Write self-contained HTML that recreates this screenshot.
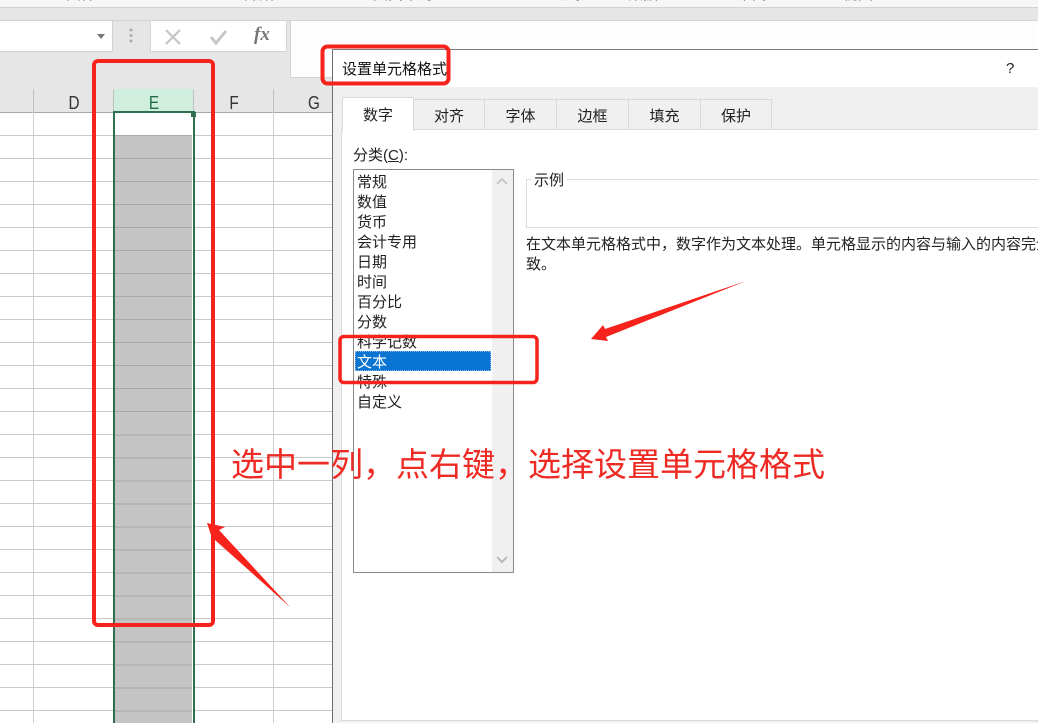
<!DOCTYPE html>
<html><head><meta charset="utf-8">
<style>
html,body{margin:0;padding:0}
body{width:1038px;height:723px;overflow:hidden;background:#fff;position:relative;font-family:"Liberation Sans","Microsoft YaHei","Noto Sans CJK SC",sans-serif;color:#222}
div{position:absolute;box-sizing:border-box}
.t{white-space:nowrap;font-size:15px;line-height:20px}
.li{left:357px;font-size:15px;line-height:20px;white-space:nowrap;color:#222}
.tab{top:99px;height:31px;background:#f0f0f0;border:1px solid #d9d9d9;border-left:0;text-align:center;font-size:15px;line-height:33px}
.hl{left:0;width:333px;height:1px;background:#c8c8c8}
.vl{top:112px;width:1px;height:611px;background:#d0d0d0}
.col{top:93px;font-size:18px;line-height:20px;color:#333;width:40px;text-align:center;transform:scaleX(.85)}
.rb{top:-14px;font-size:15px;line-height:18px;color:#555;white-space:nowrap}
</style></head><body>
<!-- ribbon -->
<div style="left:0;top:0;width:1038px;height:8px;background:#f6f6f6;border-bottom:1px solid #d2d2d2"></div>
<div class="rb" style="left:66px">文件</div>
<div class="rb" style="left:244px">开始</div>
<div class="rb" style="left:373px">页面布局</div>
<div class="rb" style="left:550px">公式</div>
<div class="rb" style="left:628px">数据</div>
<div class="rb" style="left:737px">审阅</div>
<div class="rb" style="left:843px">视图</div>
<div style="left:0;top:8px;width:1038px;height:104px;background:#e6e6e6"></div>
<div style="left:0;top:20px;width:1038px;height:1px;background:#d0d0d0"></div>
<!-- name box -->
<div style="left:0;top:20px;width:113px;height:32px;background:#fff;border:1px solid #d4d4d4;border-left:0"></div>
<svg style="position:absolute;left:0;top:0" width="300" height="60">
<path d="M97 34h8l-4 5z" fill="#777"/>
<circle cx="131" cy="30" r="1.5" fill="#aaa"/><circle cx="131" cy="35.500" r="1.500" fill="#aaa"/><circle cx="131" cy="41" r="1.500" fill="#aaa"/>
</svg>
<div style="left:150px;top:20px;width:137px;height:32px;background:#fff;border:1px solid #d4d4d4"></div>
<svg style="position:absolute;left:0;top:0" width="300" height="60">
<path d="M166 30L180 44M180 30L166 44" stroke="#c4c4c4" stroke-width="2.200" fill="none"/>
<path d="M211 37L216 43L226 31" stroke="#c8c8c8" stroke-width="3" fill="none"/>
</svg>
<div style="left:254px;top:23px;font:italic bold 19px/24px 'Liberation Serif',serif;color:#777">fx</div>
<div style="left:290px;top:20px;width:748px;height:58px;background:#fdfdfd;border:1px solid #d4d4d4;border-right:0"></div>
<!-- column headers -->
<div style="left:114px;top:89px;width:80px;height:23px;background:#cfeedd"></div>
<div style="left:33px;top:89px;width:1px;height:23px;background:#c0c0c0"></div>
<div style="left:113px;top:89px;width:1px;height:23px;background:#c0c0c0"></div>
<div style="left:193px;top:89px;width:1px;height:23px;background:#c0c0c0"></div>
<div style="left:273px;top:89px;width:1px;height:23px;background:#c0c0c0"></div>
<div class="col" style="left:54px">D</div>
<div class="col" style="left:134px;color:#1f6b46">E</div>
<div class="col" style="left:214px">F</div>
<div class="col" style="left:294px">G</div>
<div style="left:0;top:112px;width:333px;height:1px;background:#a8a8a8"></div>
<!-- grid -->
<div class="hl" style="top:135px"></div><div class="hl" style="top:158px"></div><div class="hl" style="top:181px"></div><div class="hl" style="top:204px"></div><div class="hl" style="top:227px"></div><div class="hl" style="top:250px"></div><div class="hl" style="top:273px"></div><div class="hl" style="top:296px"></div><div class="hl" style="top:319px"></div><div class="hl" style="top:342px"></div><div class="hl" style="top:365px"></div><div class="hl" style="top:388px"></div><div class="hl" style="top:411px"></div><div class="hl" style="top:434px"></div><div class="hl" style="top:457px"></div><div class="hl" style="top:480px"></div><div class="hl" style="top:503px"></div><div class="hl" style="top:526px"></div><div class="hl" style="top:549px"></div><div class="hl" style="top:572px"></div><div class="hl" style="top:595px"></div><div class="hl" style="top:618px"></div><div class="hl" style="top:641px"></div><div class="hl" style="top:664px"></div><div class="hl" style="top:687px"></div><div class="hl" style="top:710px"></div>
<div class="vl" style="left:33px"></div><div class="vl" style="left:273px"></div>
<!-- selected column -->
<div style="left:115px;top:113px;width:78px;height:610px;background:#fff"></div>
<div style="left:115px;top:135px;width:77px;height:588px;background:repeating-linear-gradient(#a9a9a9 0,#a9a9a9 1px,#c4c4c4 1px,#c4c4c4 23.020px)"></div>
<div style="left:113px;top:111px;width:2px;height:612px;background:#2f6f50"></div>
<div style="left:193px;top:111px;width:2px;height:612px;background:#2f6f50"></div>
<div style="left:113px;top:111px;width:82px;height:2px;background:#2f6f50"></div>
<div style="left:191px;top:112px;width:5px;height:5px;background:#2f6f50"></div>
<!-- dialog -->
<div style="left:332px;top:49px;width:706px;height:674px;background:#f0f0f0;border-left:1px solid #6f6f6f;border-top:1px solid #7a7a7a"></div>
<div style="left:333px;top:50px;width:705px;height:37px;background:#fff"></div>
<div class="t" style="left:342px;top:60px;color:#111">设置单元格格式</div>
<div class="t" style="left:1006px;top:59px;color:#222">?</div>
<!-- tab panel -->
<div style="left:341px;top:129px;width:697px;height:592px;background:#fff;border-left:1px solid #d9d9d9;border-top:1px solid #d9d9d9;border-bottom:1px solid #d9d9d9"></div>
<div class="tab" style="left:414px;width:71px">对齐</div>
<div class="tab" style="left:485px;width:72px">字体</div>
<div class="tab" style="left:557px;width:72px">边框</div>
<div class="tab" style="left:629px;width:72px">填充</div>
<div class="tab" style="left:701px;width:71px">保护</div>
<div style="left:342px;top:97px;width:72px;height:34px;background:#fff;border:1px solid #d9d9d9;border-bottom:0;text-align:center;font-size:15px;line-height:35px">数字</div>
<div class="t" style="left:353px;top:146px">分类(<u>C</u>):</div>
<!-- list -->
<div style="left:353px;top:169px;width:161px;height:404px;background:#fff;border:1px solid #8a8a8a"></div>
<div style="left:492px;top:170px;width:21px;height:402px;background:#f0f0f0"></div>
<svg style="position:absolute;left:490px;top:170px" width="24" height="402">
<path d="M7 14L12 9L17 14" stroke="#c4c4c4" stroke-width="1.800" fill="none"/>
<path d="M7 387L12 392L17 387" stroke="#b4b4b4" stroke-width="1.800" fill="none"/>
</svg>
<div class="li" style="top:173px">常规</div>
<div class="li" style="top:193px">数值</div>
<div class="li" style="top:213px">货币</div>
<div class="li" style="top:233px">会计专用</div>
<div class="li" style="top:253px">日期</div>
<div class="li" style="top:273px">时间</div>
<div class="li" style="top:293px">百分比</div>
<div class="li" style="top:313px">分数</div>
<div class="li" style="top:333px">科学记数</div>
<div style="left:355px;top:351px;width:136px;height:20px;background:#0a74d2;border:1px dotted #8fb8dc"></div>
<div class="li" style="top:353px;color:#fff">文本</div>
<div class="li" style="top:373px">特殊</div>
<div class="li" style="top:393px">自定义</div>
<!-- sample -->
<div style="left:526px;top:179px;width:512px;height:49px;border:1px solid #dcdcdc;border-right:0"></div>
<div class="t" style="left:531px;top:171px;background:#fff;padding:0 3px;height:19px">示例</div>
<div class="t" style="left:526px;top:235px;width:512px;overflow:hidden">在文本单元格格式中，数字作为文本处理。单元格显示的内容与输入的内容完全一致。</div>
<div class="t" style="left:526px;top:255px">致。</div>
<!-- annotations -->
<svg style="position:absolute;left:0;top:0" width="1038" height="723">
<rect x="94" y="61" width="119" height="564" rx="4" fill="none" stroke="#f5231c" stroke-width="4"/>
<rect x="322.500" y="46.500" width="126" height="37" rx="5" fill="none" stroke="#f5231c" stroke-width="4"/>
<rect x="340" y="336.500" width="197" height="46" rx="4" fill="none" stroke="#f5231c" stroke-width="3.500"/>
<path d="M207 523L225 527L219 530L290 607L215 540L213 541Z" fill="#f5231c"/>
<path d="M746 281L605 329L603 325L591 339L608 341L606 337Z" fill="#f5231c"/>
</svg>
<div style="left:231px;top:444px;font-size:33px;line-height:42px;color:#ee2a24;white-space:nowrap">选中一列，点右键，选择设置单元格格式</div>
</body></html>
